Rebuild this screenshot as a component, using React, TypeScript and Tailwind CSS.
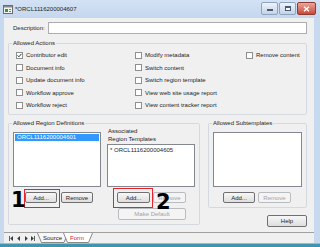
import type { ReactNode } from 'react';

const font = "font-['Liberation_Sans',Arial,sans-serif]";

function Btn({ children, disabled, className = '' }: { children: ReactNode; disabled?: boolean; className?: string }) {
  return (
    <div
      className={`flex items-center justify-center border rounded-[2px] text-[6px] leading-none ${
        disabled
          ? 'border-[#b9bcbf] text-[#a3a3a3] bg-[#f4f4f4]'
          : 'border-[#707070] text-[#1e1e1e] bg-linear-to-b from-[#f7f7f7] to-[#dedede]'
      } ${className}`}
    >
      {children}
    </div>
  );
}

function Check({ label, checked }: { label?: string; checked?: boolean }) {
  if (!label) return <div />;
  return (
    <div className="flex items-center gap-[3px] h-[12.5px]">
      <span className="w-[7px] h-[7px] border border-[#8e8f8f] bg-white flex items-center justify-center">
        {checked && (
          <svg width="5" height="5" viewBox="0 0 5 5">
            <path d="M0.6 2.4 L1.9 3.8 L4.4 0.9" stroke="#1c1c1c" strokeWidth="0.9" fill="none" />
          </svg>
        )}
      </span>
      <span className="text-[6px] leading-none text-[#1e1e1e] whitespace-nowrap">{label}</span>
    </div>
  );
}

function Group({ title, className = '', children }: { title: string; className?: string; children: ReactNode }) {
  return (
    <fieldset className={`border border-[#d3d9de] rounded-[2px] ${className}`}>
      <legend className="ml-[3px] px-[1px] text-[6px] leading-[7px] text-[#1e1e1e]">{title}</legend>
      {children}
    </fieldset>
  );
}

const actions: [string, boolean?][] = [
  ['Contributor edit', true], ['Modify metadata'], ['Remove content'],
  ['Document info'], ['Switch content'], [''],
  ['Update document info'], ['Switch region template'], [''],
  ['Workflow approve'], ['View web site usage report'], [''],
  ['Workflow reject'], ['View content tracker report'], [''],
];

export default function App() {
  return (
    <div className={`relative w-[320px] h-[247px] overflow-hidden bg-[#c6d9ef] flex flex-col ${font}`}>
      {/* title bar */}
      <div className="h-[18px] flex items-center bg-linear-to-b from-[#d3e2f4] to-[#c4d7ee]">
        <svg className="ml-[3px]" width="10" height="9" viewBox="0 0 10 9">
          <rect x="0.5" y="0.5" width="9" height="8" fill="#f4f4f4" stroke="#6b6b6b" />
          <rect x="1" y="1" width="8" height="1.5" fill="#8a8a8a" />
          <rect x="2" y="4" width="3" height="3" fill="#2f9a3a" />
          <rect x="6" y="4" width="2" height="1" fill="#7a7a7a" />
          <rect x="6" y="6" width="2" height="1" fill="#7a7a7a" />
        </svg>
        <span className="ml-[2px] text-[6px] leading-none text-[#1e1e1e]">*ORCL1116200004607</span>
        <div className="ml-auto mr-[4px] self-start mt-[2px] flex gap-[1px]">
          <div className="w-[17px] h-[13px] rounded-[2px] border border-[#8ea3be] bg-linear-to-b from-[#eef3fa] to-[#c3d3e8] flex items-center justify-center">
            <span className="w-[6px] h-[2px] bg-[#f8f8f8] border-[0.5px] border-[#4a5a70] mt-[3px]" />
          </div>
          <div className="w-[17px] h-[13px] rounded-[2px] border border-[#8ea3be] bg-linear-to-b from-[#eef3fa] to-[#c3d3e8] flex items-center justify-center">
            <span className="w-[6px] h-[5px] border border-[#4a5a70] border-t-2 bg-[#f8f8f8]" />
          </div>
          <div className="w-[19px] h-[13px] rounded-[2px] border border-[#8d3a32] bg-linear-to-b from-[#e9a596] to-[#c8473b] flex items-center justify-center">
            <svg width="7" height="6" viewBox="0 0 7 6">
              <path d="M1 0.8 L6 5.2 M6 0.8 L1 5.2" stroke="#ffffff" strokeWidth="1.5" />
            </svg>
          </div>
        </div>
      </div>

      {/* middle */}
      <div className="flex-1 flex">
        <div className="w-[4px]" />
        <div className="flex-1 bg-[#f0f0f0] flex flex-col pl-[4px] pr-[7px] pt-[4px]">
          {/* description */}
          <div className="flex items-center h-[12px]">
            <span className="w-[40px] pl-[5px] text-[6px] leading-none text-[#1e1e1e]">Description:</span>
            <div className="flex-1 h-[12px] border border-[#abadb3] bg-white" />
          </div>

          {/* allowed actions */}
          <Group title="Allowed Actions" className="mt-[6px] h-[75px]">
            <div className="grid grid-cols-[119px_111px_1fr] pl-[7px] pt-[2px]">
              {actions.map(([label, checked], i) => (
                <Check key={i} label={label} checked={checked} />
              ))}
            </div>
          </Group>

          {/* bottom groups */}
          <div className="mt-[5px] flex gap-[8px] items-start">
            <Group title="Allowed Region Definitions" className="w-[192px] h-[105px]">
              <div className="flex pl-[4px]">
                <div className="w-[88px] flex flex-col">
                  <div className="mt-[5px] h-[55px] border border-[#828790] bg-white p-[1px]">
                    <div className="h-[7px] bg-[#3399ff] text-white text-[6px] leading-[7px] pl-[2px]">ORCL1116200004601</div>
                  </div>
                  <div className="mt-[5px] flex gap-[4px] pl-[12px]">
                    <Btn className="w-[32px] h-[11px]">Add...</Btn>
                    <Btn className="w-[32px] h-[11px]">Remove</Btn>
                  </div>
                </div>
                <div className="ml-[6px] w-[88px] flex flex-col">
                  <div className="pl-[1px] text-[6px] leading-[8px] text-[#1e1e1e]">
                    <div>Associated</div>
                    <div>Region Templates</div>
                  </div>
                  <div className="mt-[1px] h-[43px] border border-[#828790] bg-white pl-[2px] pt-[2px] text-[6px] leading-[7px] text-[#1e1e1e]">
                    * ORCL1116200004605
                  </div>
                  <div className="mt-[5px] flex justify-end gap-[3px] pr-[9px]">
                    <Btn className="w-[33px] h-[11px]">Add...</Btn>
                    <Btn disabled className="w-[33px] h-[11px]">Remove</Btn>
                  </div>
                  <Btn disabled className="mt-[5px] self-end mr-[9px] w-[68px] h-[12px]">Make Default</Btn>
                </div>
              </div>
            </Group>

            <div className="flex-1 flex flex-col">
              <Group title="Allowed Subtemplates" className="h-[88px]">
                <div className="px-[4px]">
                  <div className="mt-[5px] h-[55px] border border-[#828790] bg-white" />
                  <div className="mt-[5px] flex gap-[3px] pl-[10px]">
                    <Btn className="w-[32px] h-[11px]">Add...</Btn>
                    <Btn disabled className="w-[33px] h-[11px]">Remove</Btn>
                  </div>
                </div>
              </Group>
              <Btn className="mt-[7px] self-end w-[40px] h-[12px]">Help</Btn>
            </div>
          </div>

          {/* separator */}
          <div className="mt-[5px] -ml-[4px] -mr-[7px] h-px bg-[#a0a0a0]" />

          {/* tab bar */}
          <div className="h-[10px] -ml-[4px] flex items-start">
            <svg className="ml-[4px] mt-[3px]" width="28" height="5" viewBox="0 0 28 5">
              <rect x="1" y="0" width="0.8" height="5" fill="#3a3a3a" />
              <path d="M5 0 L2.2 2.5 L5 5 Z" fill="#3a3a3a" />
              <path d="M12 0 L9.2 2.5 L12 5 Z" fill="#3a3a3a" />
              <path d="M17 0 L19.8 2.5 L17 5 Z" fill="#3a3a3a" />
              <path d="M23 0 L25.8 2.5 L23 5 Z" fill="#3a3a3a" />
              <rect x="26.2" y="0" width="0.8" height="5" fill="#3a3a3a" />
            </svg>
            <div className="relative ml-[1px] w-[31px] h-[10px] flex items-center justify-center">
              <svg className="absolute inset-0" width="31" height="10" viewBox="0 0 31 10">
                <path d="M0.5 0 L4.5 9.5 L27 9.5 L31 0" fill="#f7f7f7" stroke="#6d6d6d" strokeWidth="0.8" />
              </svg>
              <span className="relative text-[6px] leading-none text-[#1e1e1e]">Source</span>
            </div>
            <div className="relative -ml-[5px] w-[30px] h-[10px] flex items-center justify-center">
              <svg className="absolute inset-0" width="30" height="10" viewBox="0 0 30 10">
                <path d="M0.5 0 L4.5 9.5 L25.5 9.5 L29.5 0" fill="#ffffff" stroke="#6d6d6d" strokeWidth="0.8" />
              </svg>
              <span className="relative text-[6px] leading-none text-[#e0202a] -ml-[2px]">Form</span>
            </div>
          </div>
        </div>
        <div className="w-[6px]" />
      </div>

      {/* bottom edge */}
      <div className="h-[4px] bg-[#3f95ad] border-t border-[#8cc3d3]" />

      {/* annotations */}
      <div className="absolute left-[24px] top-[189px] w-[36px] h-[19px] border-[1.5px] border-[#e3262b]" />
      <div className="absolute left-[113px] top-[188px] w-[40px] h-[20px] border-[1.5px] border-[#e3262b]" />
      <span className="absolute left-[11px] top-[190px] text-[21px] leading-none font-bold text-black font-['DejaVu_Sans',sans-serif]">1</span>
      <span className="absolute left-[156px] top-[192px] text-[21px] leading-none font-bold text-black font-['DejaVu_Sans',sans-serif]">2</span>
    </div>
  );
}
